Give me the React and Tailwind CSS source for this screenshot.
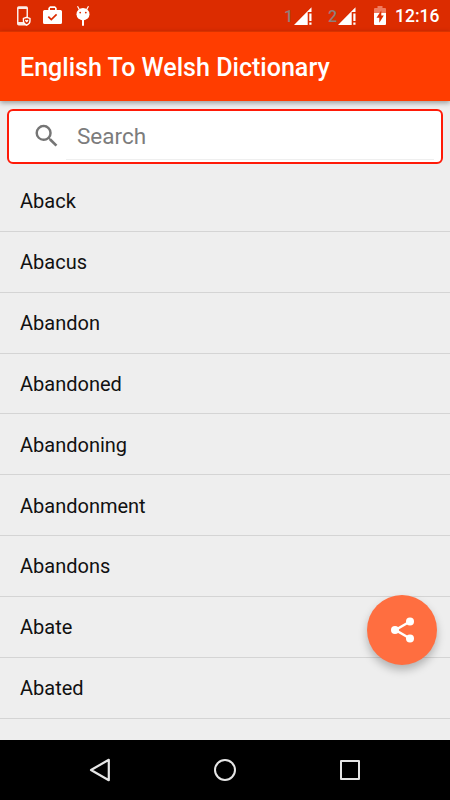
const words = [
  'Aback', 'Abacus', 'Abandon', 'Abandoned', 'Abandoning',
  'Abandonment', 'Abandons', 'Abate', 'Abated',
];

function Signal() {
  return (
    <svg className="h-[18px] w-[18px]" viewBox="0 0 18 18" fill="#fff">
      <path d="M0 18 17.500 .3V5H13.700v13z" />
      <path d="M15.300 6.500h2.200v7.500h-2.200zM15.300 15.400h2.200v2.400h-2.200z" />
    </svg>
  );
}

function StatusBar() {
  return (
    <header className="flex h-[31px] shrink-0 items-center bg-[#dc2c00] pl-[17px] pr-[10px]">
      <svg className="h-5 w-[14px]" viewBox="0 0 14 20">
        <path fillRule="evenodd" d="M1.800 .3h7.400A1.800 1.800 0 0 1 11 2.100v15.700a1.800 1.800 0 0 1-1.800 1.800H1.800A1.800 1.800 0 0 1 0 17.800V2.100A1.800 1.800 0 0 1 1.800 .3zM1.500 3v13h8V3z" fill="#fff" fillOpacity=".9" />
        <path d="M9.700 11.300 13 12.400v2.700c0 1.900-1.300 3.200-3.300 4.100-2-.9-3.300-2.200-3.300-4.100v-2.700z" fill="#dc2c00" stroke="#fff" strokeWidth="1.300" />
        <path d="m9.700 16.600-1.500-1.500c-.6-1.300.9-1.900 1.500-.8.6-1.100 2.100-.5 1.500.8z" fill="#fff" />
      </svg>
      <svg className="ml-[12px] h-5 w-[19px]" viewBox="0 0 19 20">
        <path fillRule="evenodd" d="M7 .2h5l1.700 1.700V4h3.800A1.500 1.500 0 0 1 19 5.500V16.500a1.500 1.500 0 0 1-1.500 1.500h-16A1.500 1.500 0 0 1 0 16.500V5.500A1.500 1.500 0 0 1 1.500 4h3.800V1.900zM7 4h5V2H7z" fill="#fff" />
        <path d="m5.300 10.600 3 2.900 5.300-5.200" fill="none" stroke="#dc2c00" strokeWidth="1.700" />
      </svg>
      <svg className="ml-[14px] h-5 w-[14px]" viewBox="0 0 14 20">
        <path d="M1.500 .3 3.500 3.800M12.500 .3 10.500 3.800" stroke="#fff" strokeWidth="1.200" />
        <ellipse cx="7" cy="8.200" rx="6.500" ry="6.200" fill="#fff" />
        <path d="M6 13h2v6a1 1 0 0 1-2 0z" fill="#fff" />
        <circle cx="4.200" cy="6.600" r=".9" fill="#dc2c00" />
        <circle cx="9.800" cy="6.600" r=".9" fill="#dc2c00" />
      </svg>
      <div className="ml-auto flex items-center">
        <span className="w-[10px] pt-[3px] text-[16px] font-medium leading-none text-[#8f7f7a]">1</span>
        <Signal />
        <span className="ml-[16px] w-[10px] pt-[3px] text-[16px] font-medium leading-none text-[#8f7f7a]">2</span>
        <Signal />
        <svg className="ml-[18px] h-[19px] w-3" viewBox="0 0 12 19">
          <path d="M3.500 0h5v2H11a1 1 0 0 1 1 1v4H0V3a1 1 0 0 1 1-1h2.500z" fill="#f07b5f" />
          <path d="M0 7h12v11a1 1 0 0 1-1 1H1a1 1 0 0 1-1-1z" fill="#fff" />
          <path d="M7.300 4.500 2.500 11.800h2.800v5L9.800 9.500H7.300z" fill="#dc2c00" />
        </svg>
        <span className="ml-[9px] w-[45px] whitespace-nowrap pt-[3px] text-[17.5px] font-medium leading-none text-white">12:16</span>
      </div>
    </header>
  );
}

export default function App() {
  return (
    <div className="relative flex h-[800px] w-[450px] flex-col overflow-hidden bg-[#eee] font-['Roboto',sans-serif]">
      <StatusBar />
      <div className="flex h-[70px] shrink-0 items-center border-t border-[#d83300] bg-[#ff3d00] px-5 pt-[2px] shadow-[0_2px_5px_rgba(0,0,0,0.35)]">
        <h1 className="whitespace-nowrap text-[25.07px] font-medium leading-none text-white">English To Welsh Dictionary</h1>
      </div>

      <label className="ml-[7px] mr-[7px] mt-[8px] flex h-[55px] shrink-0 items-center rounded-[6px] border-2 border-[#ff1a08] bg-white pl-[22px] pr-[7px]">
        <svg className="h-[30px] w-[30px]" viewBox="-0.6 0.8 24 24" fill="#757575">
          <path d="M15.500 14h-.79l-.28-.27A6.471 6.471 0 0 0 16 9.500 6.500 6.500 0 1 0 9.500 16c1.610 0 3.090-.590 4.230-1.570l.27.28v.79l5 4.990L20.490 19l-4.990-5zm-6 0C7.010 14 5 11.990 5 9.500S7.010 5 9.500 5 14 7.010 14 9.500 11.990 14 9.500 14z" />
        </svg>
        <span className="ml-[5px] flex h-[46px] flex-1 items-center border-b border-[#efefef] pl-[11px] pt-[1px] text-[22.5px] text-[#7c7c7c]">Search</span>
      </label>

      <ul className="mt-[7px]">
        {words.map((word) => (
          <li key={word} className="flex h-[60.850px] items-center border-b border-[#d4d4d4] pl-5 pt-[1px] text-[20px] leading-none text-[#111]">{word}</li>
        ))}
      </ul>

      <button aria-label="Share" className="absolute left-[367px] top-[595px] flex h-[70px] w-[70px] items-center justify-center rounded-full bg-[#ff6e40] shadow-[0_5px_8px_rgba(0,0,0,0.25)]">
        <svg className="h-[30px] w-[30px]" viewBox="-0.500 0 30 30" fill="#fff">
          <path d="M22.500 6.500 8 15l14.500 8.500" fill="none" stroke="#fff" strokeWidth="2.500" />
          <circle cx="22.500" cy="6.500" r="4" />
          <circle cx="7.500" cy="15" r="4" />
          <circle cx="22.500" cy="23.500" r="4" />
        </svg>
      </button>

      <nav className="mt-auto flex h-[60px] shrink-0 items-center justify-between bg-black pl-[88px] pr-[88px]">
        <svg className="h-6 w-6" viewBox="0 0 24 24" fill="none" stroke="#e6e6e6" strokeWidth="2.200" strokeLinejoin="round">
          <path d="M3 12 20.800 1.800v20.400z" />
        </svg>
        <svg className="h-6 w-6" viewBox="0 0 24 24" fill="none" stroke="#e6e6e6" strokeWidth="2">
          <circle cx="12" cy="12" r="10" />
        </svg>
        <svg className="h-6 w-6" viewBox="0 0 24 24" fill="none" stroke="#e6e6e6" strokeWidth="2" strokeLinejoin="round">
          <rect x="3" y="3" width="18" height="18" />
        </svg>
      </nav>
    </div>
  );
}
